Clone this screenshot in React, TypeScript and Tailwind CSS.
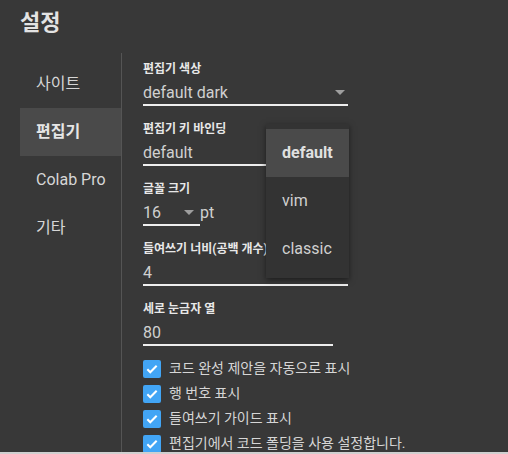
const Check = ({ label }: { label: string }) => (
  <div className="flex items-center h-[25px]">
    <span className="w-[18px] h-[18px] rounded-[2px] bg-[#42a5f5] flex items-center justify-center">
      <svg width="14" height="14" viewBox="0 0 24 24" fill="none" stroke="#fff" strokeWidth="3.5">
        <path d="M4 12.5l5 5L20 6.5" />
      </svg>
    </span>
    <span className="ml-[8px] text-[14px] text-[#d6d6d6]">{label}</span>
  </div>
);

const Arrow = () => (
  <svg width="10" height="5" viewBox="0 0 10 5">
    <path d="M0 0h10L5 5z" fill="#9e9e9e" />
  </svg>
);

const Field = ({ label, w, children }: { label: string; w: string; children: React.ReactNode }) => (
  <div className={`${w} h-[60px]`}>
    <div className="h-[16px] flex items-center text-[12px] font-bold text-[#e8e8e8] whitespace-nowrap">{label}</div>
    <div className="h-[29px] pt-[4px] flex items-center border-b-2 border-[#eee] text-[16px] text-[#d0d0d0] relative">
      {children}
    </div>
  </div>
);

export default function App() {
  return (
    <div
      className="w-[508px] h-[454px] bg-[#383838] overflow-hidden relative border-b-2 border-[#d0d0d0]"
      style={{ fontFamily: 'Roboto, "Noto Sans CJK KR", sans-serif' }}
    >
      <h1 className="pl-[20px] pt-[8px] text-[22px] font-bold text-[#e3e3e3] leading-[30px]">설정</h1>
      <div className="flex mt-[15px]">
        <nav className="ml-[20px] w-[102px] pt-[7px] border-r border-[#555] h-[420px]">
          <div className="h-[48px] flex items-center pl-[16px] text-[16px] text-[#d6d6d6]">사이트</div>
          <div className="h-[48px] flex items-center pl-[16px] text-[16px] font-bold text-[#e6e6e6] bg-[#4a4a4a]">편집기</div>
          <div className="h-[48px] flex items-center pl-[16px] text-[16px] text-[#d6d6d6]">Colab Pro</div>
          <div className="h-[48px] flex items-center pl-[16px] text-[16px] text-[#d6d6d6]">기타</div>
        </nav>
        <div className="pl-[21px] pt-[8px] relative">
          <Field label="편집기 색상" w="w-[205px]">
            <span>default dark</span>
            <span className="ml-auto mr-[3px]"><Arrow /></span>
          </Field>
          <Field label="편집기 키 바인딩" w="w-[205px]">
            <span>default</span>
          </Field>
          <Field label="글꼴 크기" w="w-[57px]">
            <span>16</span>
            <span className="ml-[23px]"><Arrow /></span>
            <span className="absolute left-[57px]">pt</span>
          </Field>
          <Field label="들여쓰기 너비(공백 개수)" w="w-[205px]">
            <span>4</span>
          </Field>
          <Field label="세로 눈금자 열" w="w-[190px]">
            <span>80</span>
          </Field>
          <div className="-mt-[5px]">
            <Check label="코드 완성 제안을 자동으로 표시" />
            <Check label="행 번호 표시" />
            <Check label="들여쓰기 가이드 표시" />
            <Check label="편집기에서 코드 폴딩을 사용 설정합니다." />
          </div>
          <div className="absolute left-[144px] top-[71px] w-[83px] py-[5px] bg-[#333] shadow-[0_2px_6px_rgba(0,0,0,0.5)]">
            <div className="h-[48px] flex items-center pl-[16px] bg-[#4a4a4a] text-[16px] font-bold text-[#e0e0e0]">default</div>
            <div className="h-[48px] flex items-center pl-[16px] text-[16px] text-[#d0d0d0]">vim</div>
            <div className="h-[48px] flex items-center pl-[16px] text-[16px] text-[#d0d0d0]">classic</div>
          </div>
        </div>
      </div>
    </div>
  );
}
